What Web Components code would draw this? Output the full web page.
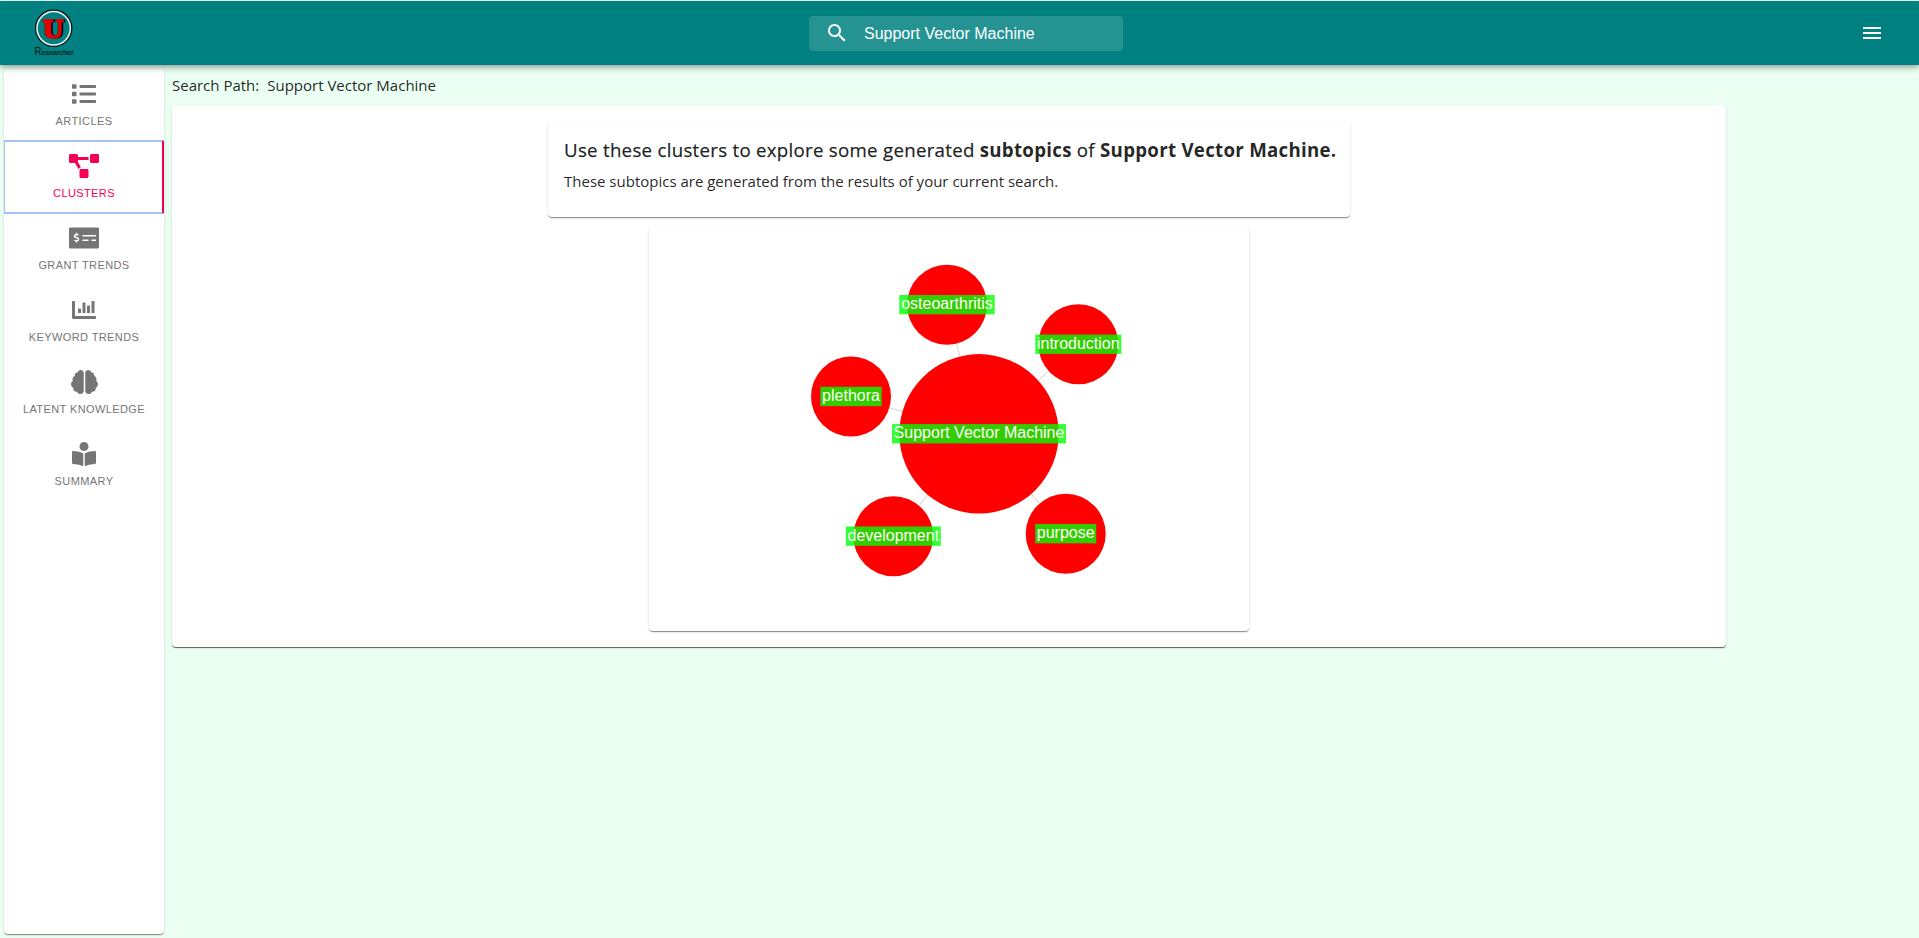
<!DOCTYPE html>
<html lang="en">
<head>
<meta charset="utf-8">
<title>Researcher</title>
<style>
html, body { margin: 0; height: 100%; }
body { background: #ebfff3; font-family: "Open Sans", "Noto Sans", sans-serif; color: rgba(0,0,0,.87); overflow: hidden; }
</style>
</head>
<body>
<research-app></research-app>
<script>
const define = (name, html, init) => {
  const template = document.createElement('template');
  template.innerHTML = html;
  customElements.define(name, class extends HTMLElement {
    connectedCallback() {
      if (this.shadowRoot) return;
      this.attachShadow({ mode: 'open' }).append(template.content.cloneNode(true));
      if (init) init(this, this.shadowRoot);
    }
  });
};

const ICONS = {
  list: [512, 'M80 368H16a16 16 0 0 0-16 16v64a16 16 0 0 0 16 16h64a16 16 0 0 0 16-16v-64a16 16 0 0 0-16-16zm0-320H16A16 16 0 0 0 0 64v64a16 16 0 0 0 16 16h64a16 16 0 0 0 16-16V64a16 16 0 0 0-16-16zm0 160H16a16 16 0 0 0-16 16v64a16 16 0 0 0 16 16h64a16 16 0 0 0 16-16v-64a16 16 0 0 0-16-16zm416 176H176a16 16 0 0 0-16 16v32a16 16 0 0 0 16 16h320a16 16 0 0 0 16-16v-32a16 16 0 0 0-16-16zm0-320H176a16 16 0 0 0-16 16v32a16 16 0 0 0 16 16h320a16 16 0 0 0 16-16V80a16 16 0 0 0-16-16zm0 160H176a16 16 0 0 0-16 16v32a16 16 0 0 0 16 16h320a16 16 0 0 0 16-16v-32a16 16 0 0 0-16-16z'],
  diagram: [640, 'M384 320H256c-17.67 0-32 14.33-32 32v128c0 17.67 14.33 32 32 32h128c17.67 0 32-14.33 32-32V352c0-17.67-14.33-32-32-32zM192 32c0-17.67-14.33-32-32-32H32C14.33 0 0 14.33 0 32v128c0 17.67 14.33 32 32 32h95.72l73.16 128.04C211.98 300.98 232.4 288 256 288h.28L192 175.51V128h224V64H192V32zM608 0H480c-17.67 0-32 14.33-32 32v128c0 17.67 14.33 32 32 32h128c17.67 0 32-14.33 32-32V32c0-17.67-14.33-32-32-32z'],
  money: [640, 'M608 32H32C14.33 32 0 46.33 0 64v384c0 17.67 14.33 32 32 32h576c17.67 0 32-14.33 32-32V64c0-17.67-14.33-32-32-32zM176 327.88V344c0 4.42-3.58 8-8 8h-16c-4.42 0-8-3.58-8-8v-16.29c-11.29-.58-22.27-4.52-31.37-11.35-3.9-2.93-4.1-8.77-.57-12.14l11.75-11.21c2.77-2.64 6.89-2.76 10.13-.73 3.87 2.42 8.26 3.72 12.82 3.72h28.11c6.5 0 11.8-5.92 11.8-13.19 0-5.95-3.61-11.19-8.77-12.73l-45-13.5c-18.59-5.58-31.58-23.42-31.58-43.39 0-24.52 19.05-44.44 42.67-45.07V152c0-4.42 3.58-8 8-8h16c4.42 0 8 3.58 8 8v16.29c11.29.58 22.27 4.51 31.37 11.35 3.9 2.93 4.1 8.77.57 12.14l-11.75 11.21c-2.77 2.64-6.89 2.76-10.13.73-3.87-2.43-8.26-3.72-12.82-3.72h-28.11c-6.5 0-11.8 5.92-11.8 13.19 0 5.95 3.61 11.19 8.77 12.73l45 13.5c18.59 5.58 31.58 23.42 31.58 43.39 0 24.53-19.05 44.44-42.67 45.07zM416 312c0 4.42-3.58 8-8 8H296c-4.42 0-8-3.58-8-8v-16c0-4.42 3.58-8 8-8h112c4.42 0 8 3.58 8 8v16zm160 0c0 4.42-3.58 8-8 8h-80c-4.42 0-8-3.58-8-8v-16c0-4.42 3.58-8 8-8h80c4.42 0 8 3.58 8 8v16zm0-96c0 4.42-3.58 8-8 8H296c-4.42 0-8-3.58-8-8v-16c0-4.42 3.58-8 8-8h272c4.42 0 8 3.58 8 8v16z'],
  chart: [512, 'M332.8 320h38.4c6.4 0 12.8-6.4 12.8-12.8V172.8c0-6.4-6.4-12.8-12.8-12.8h-38.4c-6.4 0-12.8 6.4-12.8 12.8v134.4c0 6.4 6.4 12.8 12.8 12.8zm96 0h38.4c6.4 0 12.8-6.4 12.8-12.8V76.8c0-6.4-6.4-12.8-12.8-12.8h-38.4c-6.4 0-12.8 6.4-12.8 12.8v230.4c0 6.4 6.4 12.8 12.8 12.8zm-288 0h38.4c6.4 0 12.8-6.4 12.8-12.8v-70.4c0-6.4-6.4-12.8-12.8-12.8h-38.4c-6.4 0-12.8 6.4-12.8 12.8v70.4c0 6.4 6.4 12.8 12.8 12.8zm96 0h38.4c6.4 0 12.8-6.4 12.8-12.8V108.8c0-6.4-6.4-12.8-12.8-12.8h-38.4c-6.4 0-12.8 6.4-12.8 12.8v198.4c0 6.4 6.4 12.8 12.8 12.8zM496 384H64V80c0-8.84-7.16-16-16-16H16C7.16 64 0 71.16 0 80v336c0 17.67 14.33 32 32 32h464c8.84 0 16-7.16 16-16v-32c0-8.84-7.16-16-16-16z'],
  brain: [576, 'M208 0c-29.9 0-54.7 20.5-61.8 48.2-.8 0-1.4-.2-2.2-.2-35.3 0-64 28.7-64 64 0 4.8.6 9.5 1.7 14C52.5 138 32 166.6 32 200c0 12.6 3.2 24.3 8.3 34.9C16.3 248.7 0 274.3 0 304c0 33.3 20.4 61.9 49.4 73.9-.9 4.6-1.4 9.3-1.4 14.1 0 39.8 32.2 72 72 72 4.1 0 8.1-.5 12-1.2 9.6 28.5 36.2 49.2 68 49.2 39.8 0 72-32.2 72-72V64c0-35.3-28.7-64-64-64zm368 304c0-29.7-16.3-55.3-40.3-69.1 5.2-10.6 8.3-22.3 8.3-34.9 0-33.4-20.5-62-49.7-74 1-4.5 1.7-9.2 1.7-14 0-35.3-28.7-64-64-64-.8 0-1.5.2-2.2.2C422.7 20.5 397.9 0 368 0c-35.3 0-64 28.6-64 64v376c0 39.8 32.2 72 72 72 31.8 0 58.4-20.7 68-49.2 3.9.7 7.9 1.2 12 1.2 39.8 0 72-32.2 72-72 0-4.8-.5-9.5-1.4-14.1 29-12 49.4-40.6 49.4-73.9z'],
  reader: [512, 'M352 96c0-53.02-42.98-96-96-96s-96 42.98-96 96 42.98 96 96 96 96-42.98 96-96zM233.59 241.1c-59.33-36.32-155.43-46.3-203.79-49.05C13.55 191.13 0 203.51 0 219.14v222.8c0 14.33 11.59 26.28 26.49 27.05 43.66 2.29 131.99 10.68 193.04 41.43 9.37 4.72 20.48-1.71 20.48-11.87V252.56c-.01-4.67-2.32-8.95-6.42-11.46zm248.61-49.05c-48.35 2.74-144.46 12.73-203.78 49.05-4.1 2.51-6.41 6.96-6.41 11.63v245.79c0 10.19 11.14 16.63 20.54 11.9 61.04-30.72 149.32-39.11 192.97-41.4 14.9-.78 26.49-12.73 26.49-27.06V219.14c-.01-15.63-13.56-28.01-29.81-27.09z']
};

// Brand mark: ringed letter with the product name below it
define('brand-logo', `
<style>
:host { display: block; width: 44px; height: 54px; }
svg { display: block; }
</style>
<svg width="44" height="54" viewBox="32 4 44 54">
  <circle cx="53.7" cy="28.3" r="18" fill="none" stroke="#111" stroke-width="1.5"/>
  <circle cx="53.7" cy="28.3" r="16.7" fill="none" stroke="#e8f4f4" stroke-width="1.5"/>
  <g font-family="DejaVu Serif, serif" font-weight="bold" font-size="24">
    <text x="44.6" y="38.2" fill="#000" stroke="#000" stroke-width="1.6" textLength="20.6" lengthAdjust="spacingAndGlyphs" aria-hidden="true">U</text>
    <text x="42.6" y="37.6" fill="#e80000" stroke="#e80000" stroke-width="1.6" textLength="20.6" lengthAdjust="spacingAndGlyphs">U</text>
  </g>
  <text x="34.6" y="55" fill="#021a1a" stroke="#021a1a" stroke-width=".2" font-family="Liberation Sans, sans-serif" font-size="8" textLength="39" lengthAdjust="spacingAndGlyphs"><tspan font-size="10.5">R</tspan>esearcher</text>
</svg>`);

define('search-box', `
<style>
:host { display: flex; align-items: center; box-sizing: border-box; width: 314px; height: 35px; padding: 0 16px; gap: 15px; border-radius: 4px; background: rgba(255,255,255,.15); color: #fff; font: 16px/19px "Liberation Sans", sans-serif; }
svg { display: block; flex: none; fill: currentColor; position: relative; top: -.5px; }
</style>
<svg width="24" height="24" viewBox="0 0 24 24"><path d="M15.5 14h-.79l-.28-.27C15.41 12.59 16 11.11 16 9.5 16 5.91 13.09 3 9.5 3S3 5.91 3 9.5 5.91 16 9.5 16c1.61 0 3.09-.59 4.23-1.57l.27.28v.79l5 4.99L20.49 19l-4.99-5zm-6 0C7.01 14 5 11.99 5 9.5S7.01 5 9.5 5 14 7.01 14 9.5 11.99 14 9.5 14z"/></svg>
<span><slot></slot></span>`);

define('app-header', `
<style>
:host { display: grid; grid-template-columns: 809px 1fr auto; align-items: center; box-sizing: border-box; height: 64px; margin-top: 1px; padding-right: 35px; background: teal; position: relative; z-index: 2; box-shadow: 0 2px 4px -1px rgba(0,0,0,.2), 0 4px 5px 0 rgba(0,0,0,.14), 0 1px 10px 0 rgba(0,0,0,.12); }
brand-logo { margin: -4px 0 0 32px; }
search-box { margin-top: 1px; }
.menu { display: block; fill: #fff; }
</style>
<brand-logo></brand-logo>
<search-box>Support Vector Machine</search-box>
<svg class="menu" width="24" height="24" viewBox="0 0 24 24"><path d="M3 18h18v-2H3v2zm0-5h18v-2H3v2zm0-7v2h18V6H3z"/></svg>`);

define('nav-tab', `
<style>
:host { display: flex; flex-direction: column; align-items: center; box-sizing: border-box; height: 72px; padding-top: 13px; gap: 7px; color: #757575; font: 11px/16px "Liberation Sans", sans-serif; letter-spacing: .4px; }
:host([selected]) { color: #f50057; outline: 2px solid #a1c2fa; outline-offset: -1px; position: relative; }
:host([selected])::after { content: ""; position: absolute; right: 0; top: 0; bottom: 0; width: 2px; background: #f50057; }
svg { display: block; height: 24px; fill: currentColor; }
span { white-space: nowrap; }
</style>
<svg><path></path></svg><span><slot></slot></span>`, (el, root) => {
  const [w, d] = ICONS[el.getAttribute('icon')];
  const svg = root.querySelector('svg');
  svg.setAttribute('viewBox', `0 0 ${w} 512`);
  svg.setAttribute('width', w * 24 / 512);
  root.querySelector('path').setAttribute('d', d);
});

define('paper-card', `
<style>
:host { display: block; box-sizing: border-box; background: #fff; border-radius: 4px; box-shadow: 0 1px 0 0 rgba(0,0,0,var(--edge, .12)), 0 2px 1px -1px rgba(0,0,0,.2), 0 1px 1px 0 rgba(0,0,0,.14), 0 1px 3px 0 rgba(0,0,0,.12); }
</style>
<slot></slot>`);

define('side-nav', `
<style>
:host { display: block; width: 160px; }
paper-card { height: 865px; overflow: hidden; }
</style>
<paper-card>
  <nav-tab icon="list">ARTICLES</nav-tab>
  <nav-tab icon="diagram" selected>CLUSTERS</nav-tab>
  <nav-tab icon="money">GRANT TRENDS</nav-tab>
  <nav-tab icon="chart">KEYWORD TRENDS</nav-tab>
  <nav-tab icon="brain">LATENT KNOWLEDGE</nav-tab>
  <nav-tab icon="reader">SUMMARY</nav-tab>
</paper-card>`);

// Node diagram; coordinates are local to the 600 x 406 canvas
const NODES = [
  { t: 'Support Vector Machine', x: 330, y: 208.8, r: 79.7, w: 174 },
  { t: 'osteoarthritis', x: 298, y: 79.7, r: 40, w: 95.4 },
  { t: 'introduction', x: 429.3, y: 119.3, r: 40, w: 86 },
  { t: 'plethora', x: 202, y: 171.5, r: 40, w: 61.4 },
  { t: 'development', x: 244.3, y: 311.2, r: 40, w: 95 },
  { t: 'purpose', x: 416.7, y: 308.7, r: 40, w: 61 }
];
define('cluster-graph', `
<style>
:host { display: block; height: 406px; }
svg { display: block; font: 16px "Liberation Sans", sans-serif; }
</style>
<svg width="600" height="406" viewBox="0 0 600 406"></svg>`, (el, root) => {
  const hub = NODES[0];
  root.querySelector('svg').innerHTML =
    NODES.slice(1).map(n => `<line x1="${hub.x}" y1="${hub.y}" x2="${n.x}" y2="${n.y}" stroke="#d3d3d3"/>`).join('') +
    NODES.map(n => `<circle cx="${n.x}" cy="${n.y}" r="${n.r}" fill="red"/>
      <rect x="${n.x - n.w / 2}" y="${n.y - 9.7}" width="${n.w}" height="19.3" fill="rgba(0,255,0,.8)"/>
      <text x="${n.x}" y="${n.y + 4.4}" text-anchor="middle" fill="#fff">${n.t}</text>`).join('');
});

define('intro-text', `
<style>
:host { display: block; padding: 15px 16px; }
h2 { margin: 0; font-size: 18.7px; line-height: 28px; font-weight: 500; white-space: nowrap; letter-spacing: .27px; -webkit-text-stroke: .25px currentColor; }
b { font-weight: 700; -webkit-text-stroke: 0; }
p { margin: 5px 0 0; font-size: 15px; line-height: 24px; white-space: nowrap; }
</style>
<h2>Use these clusters to explore some generated <b>subtopics</b> of <b>Support Vector Machine.</b></h2>
<p>These subtopics are generated from the results of your current search.</p>`);

define('cluster-page', `
<style>
:host { display: block; width: 1554px; }
.path { display: flex; gap: 8px; height: 36px; font-size: 15px; line-height: 32px; white-space: nowrap; }
.main { display: flex; flex-direction: column; align-items: center; padding: 16px; gap: 8px; height: 542px; --edge: .35; }
.intro, .graph { flex: none; --edge: .12; }
.intro { width: 802px; height: 96px; }
.graph { width: 600px; height: 406px; }
</style>
<div class="path"><span>Search Path:</span><span>Support Vector Machine</span></div>
<paper-card class="main">
  <paper-card class="intro"><intro-text></intro-text></paper-card>
  <paper-card class="graph"><cluster-graph></cluster-graph></paper-card>
</paper-card>`);

define('research-app', `
<style>
:host { display: flow-root; }
main { display: flex; gap: 8px; padding: 4px 4px 0; }
</style>
<app-header></app-header>
<main><side-nav></side-nav><cluster-page></cluster-page></main>`);
</script>
</body>
</html>
